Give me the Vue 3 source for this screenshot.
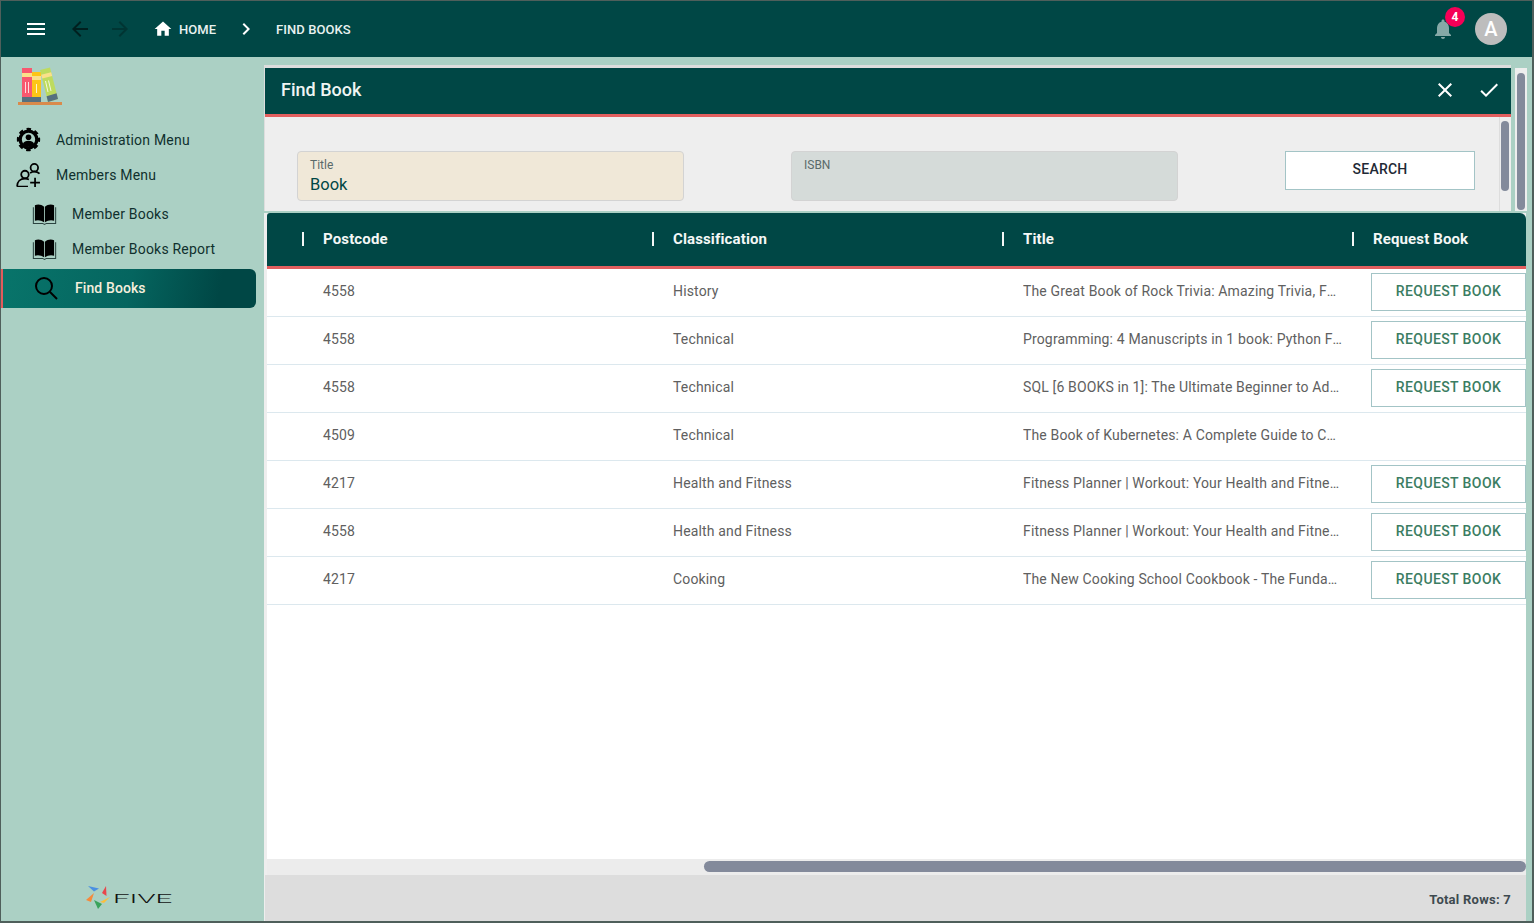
<template>
  <div class="app">
    <header class="topbar">
      <svg class="ico menu" viewBox="0 0 24 24"><path d="M3 18h18v-2H3v2zm0-5h18v-2H3v2zm0-7v2h18V6H3z" /></svg>
      <svg class="ico back" viewBox="0 0 24 24"><path d="M20 11H7.83l5.59-5.59L12 4l-8 8 8 8 1.41-1.41L7.83 13H20v-2z" /></svg>
      <svg class="ico forward" viewBox="0 0 24 24"><path d="M12 4l-1.41 1.41L16.17 11H4v2h12.17l-5.58 5.59L12 20l8-8z" /></svg>
      <svg class="ico home" viewBox="0 0 24 24"><path d="M10 20v-6h4v6h5v-8h3L12 3 2 12h3v8z" /></svg>
      <span class="crumb">HOME</span>
      <svg class="ico chevron" viewBox="0 0 24 24"><path d="M10 6L8.59 7.41 13.17 12l-4.58 4.59L10 18l6-6z" /></svg>
      <span class="crumb">FIND BOOKS</span>
      <div class="bell">
        <svg class="ico bell-ico" viewBox="0 0 24 24"><path d="M12 22c1.1 0 2-.9 2-2h-4c0 1.1.89 2 2 2zm6-6v-5c0-3.07-1.64-5.64-4.5-6.32V4c0-.83-.67-1.5-1.5-1.5s-1.5.67-1.5 1.5v.68C7.63 5.36 6 7.92 6 11v5l-2 2v1h16v-1l-2-2z" /></svg>
        <span class="badge">4</span>
      </div>
      <div class="avatar">A</div>
    </header>

    <div class="body">
      <aside class="sidebar">
        <div class="logo">
          <svg width="46" height="40" viewBox="0 0 46 40">
            <rect x="4" y="2" width="10" height="34" fill="#f8586f" />
            <rect x="4" y="7" width="10" height="4" fill="#fbe08a" />
            <rect x="4" y="31" width="10" height="5" fill="#56707f" />
            <rect x="14" y="6" width="9" height="30" fill="#fdc517" />
            <rect x="14" y="10" width="9" height="4" fill="#fbe08a" />
            <rect x="14" y="31" width="9" height="5" fill="#56707f" />
            <polygon points="22,4 32,1.500 40,33 30,36" fill="#bedb5e" />
            <polygon points="23.200,8.800 33.200,6.200 34.200,10 24.200,12.600" fill="#fbe08a" />
            <polygon points="28.600,30.200 38.600,27.300 40,33 30,36" fill="#56707f" />
            <path d="M27.500 15l2.500 11M30.500 14.500l2.500 10.500M7.500 16v11M10.500 16v11M18.500 18v9" stroke="#fff" stroke-width=".8" />
            <rect x="0" y="36" width="44" height="3" fill="#d98a4b" />
          </svg>
        </div>

        <div class="nav-item">
          <svg class="nav-ico" viewBox="0 0 24 24">
            <circle cx="12" cy="12" r="8" fill="none" stroke="#000" stroke-width="3.200" />
            <circle cx="12" cy="12" r="10" fill="none" stroke="#000" stroke-width="2.400" stroke-dasharray="4.300 3.554" stroke-dashoffset="2.150" />
            <circle cx="12" cy="9.800" r="2.700" />
            <path d="M6.500 16.500c.8-2.300 3-3.200 5.500-3.200s4.700.9 5.500 3.200c-1.200 1.500-3.300 2.500-5.500 2.500s-4.300-1-5.500-2.500z" />
          </svg>
          <span>Administration Menu</span>
        </div>
        <div class="nav-item">
          <svg class="nav-ico" viewBox="0 0 24 24" fill="none" stroke="#000" stroke-width="1.700">
            <circle cx="8.600" cy="12" r="3.600" />
            <circle cx="17.600" cy="5.500" r="3.600" />
            <path d="M1 23.500c0-4.500 3-7.500 7.600-7.500 1.500 0 2.700.3 3.800.8M1 23.700h10.500M13.500 10.500c1.200-.8 2.600-1.300 4.100-1.300 2 0 3.700.7 5 1.900M18.300 15v9.500M13.600 19.700h9.400" />
          </svg>
          <span>Members Menu</span>
        </div>
        <div class="nav-item sub first">
          <svg class="nav-ico" viewBox="0 0 24 24"><path :d="bookPages" /><path :d="bookCover" class="book-cover" /></svg>
          <span>Member Books</span>
        </div>
        <div class="nav-item sub">
          <svg class="nav-ico" viewBox="0 0 24 24"><path :d="bookPages" /><path :d="bookCover" class="book-cover" /></svg>
          <span>Member Books Report</span>
        </div>
        <div class="nav-active">
          <svg class="search-ico" viewBox="0 0 24 24" fill="none" stroke="#000" stroke-width="2">
            <circle cx="10" cy="10" r="8" />
            <path d="M16 16l7 7" />
          </svg>
          <span>Find Books</span>
        </div>

        <div class="five">
          <svg width="24" height="24" viewBox="0 0 24 24">
            <path d="M2 1l11 2.500-5 3z" fill="#4a90e2" />
            <path d="M16 8l4-7 .5 10z" fill="#e8474c" />
            <path d="M14 17l10-5-6 6z" fill="#fbbf3c" />
            <path d="M8 15l8 4-4 5z" fill="#3aa35c" />
            <path d="M0 15l8-7-3 9z" fill="#f58a3c" />
          </svg>
          <span class="five-box"><span class="five-text">FIVE</span></span>
        </div>
      </aside>

      <main class="main">
        <div class="top-row">
          <section class="panel">
            <div class="panel-head">
              <span class="panel-title">Find Book</span>
              <svg class="ico head-close" viewBox="0 0 24 24"><path d="M19 6.410L17.590 5 12 10.590 6.410 5 5 6.410 10.590 12 5 17.590 6.410 19 12 13.410 17.590 19 19 17.590 13.410 12z" /></svg>
              <svg class="ico head-check" viewBox="0 0 24 24"><path d="M9 16.170L4.830 12l-1.420 1.410L9 19 21 7l-1.410-1.410z" /></svg>
            </div>
            <div class="panel-body">
              <div class="form">
                <div class="field title-field">
                  <label>Title</label>
                  <div class="value">Book</div>
                </div>
                <div class="field isbn-field">
                  <label>ISBN</label>
                </div>
                <button class="search-btn">SEARCH</button>
              </div>
              <div class="inner-track"><div class="inner-thumb"></div></div>
            </div>
          </section>
          <div class="outer-track"><div class="outer-thumb"></div></div>
        </div>

        <div class="table-wrap">
          <div class="table-head">
            <div v-for="col in columns" :key="col" class="th">
              <i class="sep"></i>{{ col }}
            </div>
          </div>
          <div class="table-body">
            <div v-for="(row, i) in rows" :key="i" class="tr">
              <div class="td">{{ row.postcode }}</div>
              <div class="td">{{ row.classification }}</div>
              <div class="td title-cell"><span class="ellipsis">{{ row.title }}</span></div>
              <div class="td btn-cell">
                <button v-if="row.request" class="request-btn">REQUEST BOOK</button>
              </div>
            </div>
          </div>
          <div class="h-track"><div class="h-thumb"></div></div>
          <div class="table-foot">Total Rows: 7</div>
        </div>
      </main>
    </div>
  </div>
</template>

<script setup>
const bookPages =
  "M2.800 4C5.500 2.800 9 3 11.600 5.500V20.500C9 18.500 5.500 18 2.800 19zM21.200 4C18.500 2.800 15 3 12.400 5.500V20.500C15 18.500 18.500 18 21.200 19z";
const bookCover = "M1.300 6v15.500h8.900l1.800 1 1.800-1h8.900V6";

const columns = ["Postcode", "Classification", "Title", "Request Book"];

const rows = [
  { postcode: "4558", classification: "History", title: "The Great Book of Rock Trivia: Amazing Trivia, Fun Facts and Stories", request: true },
  { postcode: "4558", classification: "Technical", title: "Programming: 4 Manuscripts in 1 book: Python For Beginners and More", request: true },
  { postcode: "4558", classification: "Technical", title: "SQL [6 BOOKS in 1]: The Ultimate Beginner to Advanced Guide", request: true },
  { postcode: "4509", classification: "Technical", title: "The Book of Kubernetes: A Complete Guide to Container Orchestration", request: false },
  { postcode: "4217", classification: "Health and Fitness", title: "Fitness Planner | Workout: Your Health and Fitness Journal", request: true },
  { postcode: "4558", classification: "Health and Fitness", title: "Fitness Planner | Workout: Your Health and Fitness Journal", request: true },
  { postcode: "4217", classification: "Cooking", title: "The New Cooking School Cookbook - The Fundamentals of Cooking", request: true }
];
</script>

<style>
body {
  margin: 0;
}
</style>

<style scoped>
.app {
  height: 100vh;
  box-sizing: border-box;
  display: flex;
  flex-direction: column;
  border-style: solid;
  border-color: #4f5f5b;
  border-width: 1px 2px 2px 1px;
  font-family: Roboto, "Liberation Sans", sans-serif;
  overflow: hidden;
  background: #abd0c4;
}

.ico {
  width: 24px;
  height: 24px;
  flex: none;
  fill: #fff;
}

/* --- top bar --- */
.topbar {
  height: 56px;
  flex: none;
  display: flex;
  align-items: center;
  background: #004745;
  padding-left: 23px;
}

.back {
  margin-left: 20px;
  fill: #00201f;
}

.forward {
  margin-left: 16px;
  fill: #003533;
}

.home {
  margin-left: 21px;
  width: 20px;
  height: 20px;
}

.crumb {
  margin-left: 6px;
  color: #e9f2f0;
  font-size: 13px;
  font-weight: 500;
  letter-spacing: 0.05px;
}

.chevron {
  margin: 0 12px 0 18px;
}

.bell {
  margin-left: auto;
  position: relative;
  width: 24px;
  height: 24px;
}

.bell-ico {
  fill: #86a9a7;
}

.badge {
  position: absolute;
  top: -10px;
  left: 14px;
  width: 20px;
  height: 20px;
  border-radius: 50%;
  background: #f50057;
  color: #fff;
  font-size: 12px;
  font-weight: 700;
  line-height: 20px;
  text-align: center;
}

.avatar {
  width: 32px;
  height: 32px;
  margin: 0 25px 0 20px;
  border-radius: 50%;
  background: #bdbdbd;
  color: #fff;
  font-size: 20px;
  font-weight: 500;
  line-height: 32px;
  text-align: center;
}

.body {
  flex: 1;
  min-height: 0;
  display: flex;
}

/* --- sidebar --- */
.sidebar {
  width: 263px;
  flex: none;
  display: flex;
  flex-direction: column;
}

.logo {
  height: 65px;
  flex: none;
  padding: 9px 0 0 17px;
  box-sizing: border-box;
}

.nav-item {
  height: 35px;
  display: flex;
  align-items: center;
  padding-left: 15px;
  color: #10302e;
  font-size: 14px;
  letter-spacing: 0.2px;
}

.nav-item span {
  margin-left: 15px;
}

.nav-ico {
  width: 25px;
  height: 25px;
  flex: none;
}

.book-cover {
  fill: none;
  stroke: #2c4441;
  stroke-width: 1;
}

.sub {
  padding-left: 31px;
}

.first {
  margin-top: 4px;
}

.nav-active {
  height: 39px;
  flex: none;
  margin: 3px 8px 0 0;
  display: flex;
  align-items: center;
  box-sizing: border-box;
  padding: 0 0 2px 31px;
  border-left: 2px solid #e25c5c;
  border-radius: 0 6px 6px 0;
  background: linear-gradient(100deg, #08746a 0%, #05655f 50%, #004745 85%);
  color: #f5efdd;
  font-size: 14px;
  font-weight: 500;
  letter-spacing: 0.1px;
}

.search-ico {
  width: 24px;
  height: 24px;
  flex: none;
  margin-right: 17px;
}

.five {
  margin-top: auto;
  margin-bottom: 12px;
  padding-right: 6px;
  display: flex;
  align-items: center;
  justify-content: center;
  gap: 3px;
}

.five-box {
  display: flex;
  align-items: center;
  width: 60px;
  height: 14px;
  padding-top: 4px;
}

.five-text {
  display: block;
  color: #111;
  font-size: 12px;
  font-weight: 300;
  line-height: 14px;
  transform: scaleX(2.45);
  transform-origin: left center;
}

/* --- main area --- */
.main {
  flex: 1;
  min-width: 0;
  display: flex;
  flex-direction: column;
  padding-top: 8px;
}

.top-row {
  height: 146px;
  flex: none;
  display: flex;
}

.panel {
  width: 1247px;
  flex: none;
  box-sizing: border-box;
  display: flex;
  flex-direction: column;
  border-top: 3px solid #dddddd;
  border-left: 1px solid #dddddd;
}

.panel-head {
  height: 49px;
  flex: none;
  box-sizing: border-box;
  display: flex;
  align-items: center;
  padding: 0 0 2px 16px;
  background: #004745;
  border-bottom: 3px solid #e35f5f;
  color: #eff5f3;
  font-size: 18px;
  font-weight: 500;
}

.panel-title {
  margin-bottom: 2px;
}

.head-close {
  margin-left: auto;
}

.head-check {
  margin: 0 10px 0 20px;
}

.panel-body {
  flex: 1;
  display: flex;
  background: #eeeeee;
}

.form {
  flex: 1;
  display: flex;
  align-items: flex-start;
  padding: 34px 0 0 32px;
}

.field {
  width: 387px;
  height: 50px;
  box-sizing: border-box;
  padding: 6px 12px;
  border: 1px solid #d3d3d3;
  border-radius: 4px;
}

.field label {
  display: block;
  font-size: 12px;
  line-height: 14px;
  color: #5a6a6a;
}

.title-field {
  background: #f0e8d8;
}

.isbn-field {
  margin-left: 107px;
  background: #d5dbd9;
}

.value {
  margin-top: 3px;
  font-size: 16.500px;
  line-height: 20px;
  color: #004745;
}

.search-btn {
  width: 190px;
  height: 39px;
  margin-left: 107px;
  padding: 0 0 3px;
  background: #fff;
  border: 1px solid #a3c4c6;
  color: #1f2a36;
  font-family: inherit;
  font-size: 14px;
  font-weight: 500;
  letter-spacing: 0.2px;
}

.inner-track {
  width: 12px;
  flex: none;
  box-sizing: border-box;
  border-left: 1px solid #dddddd;
  padding: 4px 2px 0 1px;
}

.inner-thumb {
  width: 8px;
  height: 70px;
  border-radius: 4px;
  background: #838a9b;
}

.outer-track {
  width: 12px;
  flex: none;
  margin: 3px 0 0 4px;
  box-sizing: border-box;
  padding: 5px 2px 1px;
  background: #eeeeee;
}

.outer-thumb {
  height: 100%;
  border-radius: 4px;
  background: #838a9b;
}

/* --- table --- */
.table-wrap {
  flex: 1;
  min-height: 0;
  margin: 2px 6px 0 0;
  display: flex;
  flex-direction: column;
  background: #eeeeee;
  padding-left: 3px;
  overflow: hidden;
}

.table-head {
  height: 56px;
  flex: none;
  box-sizing: border-box;
  display: grid;
  grid-template-columns: 350px 350px 350px 1fr;
  background: #004745;
  border-bottom: 3px solid #e35f5f;
  border-radius: 3px 6px 0 0;
}

.th {
  display: flex;
  align-items: center;
  padding: 0 0 2px 35px;
  color: #f4f7f6;
  font-size: 15px;
  font-weight: 700;
  letter-spacing: 0.13px;
}

.sep {
  width: 2px;
  height: 14px;
  margin-right: 19px;
  background: #f4f7f6;
}

.table-body {
  flex: 1;
  background: #fff;
}

.tr {
  height: 48px;
  box-sizing: border-box;
  display: grid;
  grid-template-columns: 350px 350px 376px 1fr;
  border-bottom: 1px solid #dce8ee;
}

.td {
  display: flex;
  align-items: center;
  min-width: 0;
  padding: 0 0 3px 56px;
  color: #606060;
  font-size: 14px;
  letter-spacing: 0.15px;
}

.ellipsis {
  overflow: hidden;
  white-space: nowrap;
  text-overflow: ellipsis;
}

.btn-cell {
  padding: 0 0 1px 28px;
}

.request-btn {
  width: 155px;
  height: 38px;
  padding: 0 0 2px;
  background: #fff;
  border: 1px solid #a3c4c6;
  color: #3b7d62;
  font-family: inherit;
  font-size: 14px;
  font-weight: 500;
  letter-spacing: 0.4px;
}

.h-track {
  height: 16px;
  flex: none;
  box-sizing: border-box;
  padding: 2px 0 3px 437px;
  background: #ececec;
}

.h-thumb {
  height: 11px;
  border-radius: 6px;
  background: #838a9b;
}

.table-foot {
  height: 46px;
  flex: none;
  box-sizing: border-box;
  margin-left: -2px;
  padding: 17px 15px 0 0;
  background: #dddddd;
  color: #3e4a4f;
  font-size: 13px;
  font-weight: 700;
  letter-spacing: 0.25px;
  text-align: right;
}
</style>
